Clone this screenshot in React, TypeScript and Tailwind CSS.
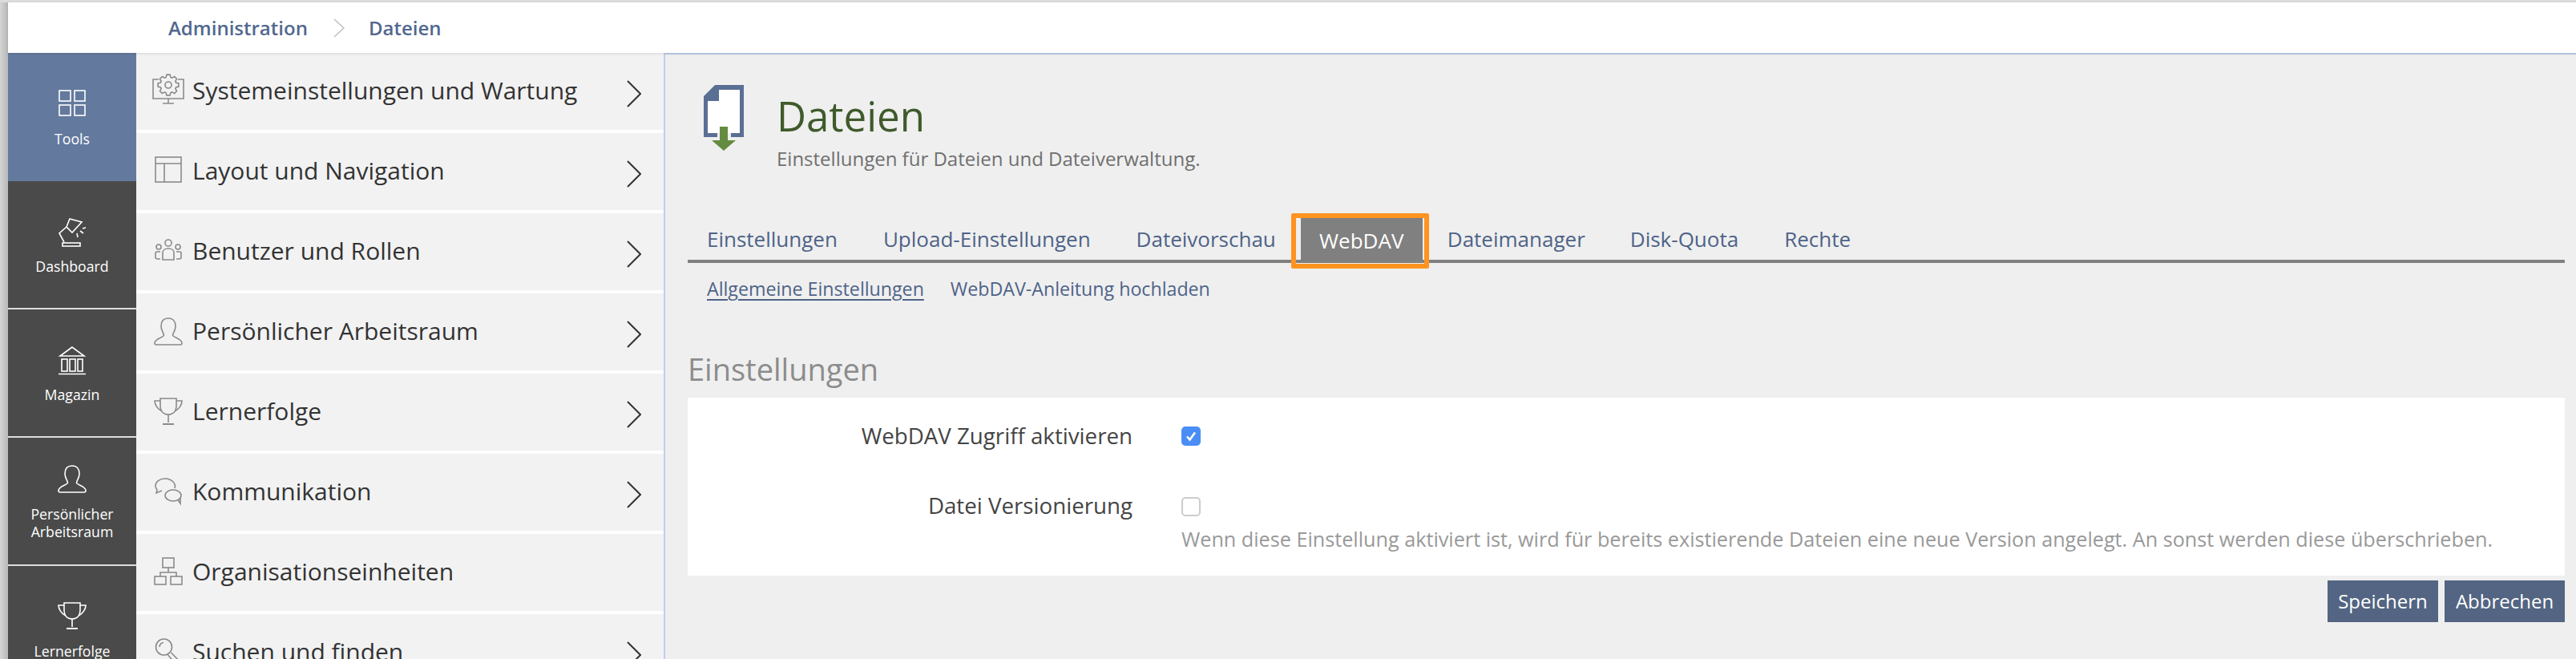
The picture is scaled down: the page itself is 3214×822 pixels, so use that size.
import React from "react";

const font = "font-['Open_Sans','Noto_Sans',sans-serif]";

function Svg({ color, sw = 1.6, children }: { color: string; sw?: number; children: React.ReactNode }) {
  return (
    <svg width={36} height={36} viewBox="0 0 36 36" fill="none" stroke={color} strokeWidth={sw} className="overflow-visible shrink-0">
      {children}
    </svg>
  );
}

function gearPath(cx: number, cy: number, outer: number, inner: number, teeth: number) {
  const pts: string[] = [];
  const step = (Math.PI * 2) / teeth;
  for (let i = 0; i < teeth; i++) {
    const a = i * step - Math.PI / 2;
    const list: [number, number][] = [
      [inner, a - step * 0.38],
      [outer, a - step * 0.2],
      [outer, a + step * 0.2],
      [inner, a + step * 0.38],
    ];
    for (const [r, t] of list) {
      pts.push(`${(cx + r * Math.cos(t)).toFixed(2)} ${(cy + r * Math.sin(t)).toFixed(2)}`);
    }
  }
  return `M${pts.join("L")}Z`;
}

const Grid = () => (
  <>
    <rect x="2" y="1" width="14" height="13" />
    <rect x="21" y="1" width="13" height="13" />
    <rect x="2" y="19" width="14" height="13" />
    <rect x="21" y="19" width="13" height="13" />
  </>
);
const Lamp = () => (
  <>
    <path d="M15 2L30 6L18 19L11 12Z" />
    <path d="M11 12L2 20L8 31" />
    <rect x="6" y="32" width="22" height="4" />
    <path d="M31 14L35 13M28 17L32 20M24 20L25 25" />
  </>
);
const Bank = () => (
  <>
    <path d="M18 2L3 13H33Z" />
    <rect x="5" y="17" width="7" height="15" />
    <rect x="15" y="17" width="7" height="15" />
    <rect x="25" y="17" width="6" height="15" />
    <path d="M1 35.5H35" />
  </>
);
const Person = () => (
  <path d="M18 1C12 1 9 5 9 11C9 16 12 19 12.5 22C12.5 25 1 26 1 32C1 33 2 34 3 34H33C34 34 35 33 35 32C35 26 23.5 25 23.5 22C24 19 27 16 27 11C27 5 24 1 18 1Z" />
);
const Trophy = () => (
  <>
    <path d="M8 1H28V10C28 17 24 21 18 21C12 21 8 17 8 10Z" />
    <path d="M8 4H1C1 8 4 14 10 17M28 4H35C35 8 32 14 26 17M18 21V31" />
    <path d="M11 33H25" strokeWidth={2} />
  </>
);
const SysGear = () => (
  <>
    <path d="M6 3H-1V27H37V3H30" />
    <path d="M18 27V33M11 33H25" />
    <circle cx="18" cy="10" r="4" />
    <path d={gearPath(18, 10, 13, 10, 8)} />
  </>
);
const LayoutIcon = () => (
  <>
    <rect x="2" y="0" width="32" height="31" />
    <path d="M2 8H34M13 8V31" />
  </>
);
const Users = () => (
  <>
    <circle cx="18" cy="7" r="4" />
    <path d="M11 28V19C11 16 14 14 18 14C22 14 25 16 25 19V28Z" />
    <circle cx="6" cy="12" r="3" />
    <circle cx="30" cy="12" r="3" />
    <path d="M8 18H4C2.5 18 2 19 2 20V25C2 26 3 27 5 27H8M28 18H32C33.5 18 34 19 34 20V25C34 26 33 27 31 27H28" />
  </>
);
const Chat = () => (
  <>
    <path d="M26 13C28 7 22 1 14 1C7 1 2 5 2 10C2 12 3 14 4 15L3 19L10 16" />
    <ellipse cx="24" cy="22" rx="10" ry="7" />
    <path d="M30 27.5L33 32V25" />
  </>
);
const Org = () => (
  <>
    <rect x="11" y="0" width="14" height="12" />
    <rect x="1" y="23" width="14" height="10" />
    <rect x="21" y="23" width="14" height="10" />
    <path d="M18 12V18M8 23V18H28V23" />
  </>
);
const Search = () => (
  <>
    <circle cx="12.5" cy="11" r="10" />
    <path d="M7 11C7 8 9 6 12 5.5" />
    <path d="M17 20.5L30 35L34 31L21.5 18" />
  </>
);
const Chevron = ({ w, h, color, sw }: { w: number; h: number; color: string; sw: number }) => (
  <svg width={w} height={h} viewBox={`0 0 ${w} ${h}`} fill="none" stroke={color} strokeWidth={sw} className="shrink-0">
    <path d={`M1 1L${w - 1} ${h / 2}L1 ${h - 1}`} />
  </svg>
);

function SideItem({ icon, label, active, h }: { icon: React.ReactNode; label: React.ReactNode; active?: boolean; h: string }) {
  return (
    <div className={`flex flex-col items-center justify-center shrink-0 pt-[4px] ${h} ${active ? "bg-[#64799e]" : "bg-[#4a4a4a]"}`}>
      <Svg color="#ffffff">{icon}</Svg>
      <div className="mt-[14px] text-center text-[17.7px] leading-[22px] text-white">{label}</div>
    </div>
  );
}

function MenuRow({ icon, label, arrow = true }: { icon: React.ReactNode; label: string; arrow?: boolean }) {
  return (
    <div className="flex items-center shrink-0 h-[96px] bg-[#f2f2f2] pl-[22px] pr-[28px]">
      <Svg color="#8a8a8a">{icon}</Svg>
      <span className="ml-[12px] mb-[2px] flex-1 text-[30px] leading-[38px] text-[#333333] whitespace-nowrap">{label}</span>
      {arrow && (
        <span className="mt-[6px]">
          <Chevron w={18} h={34} color="#333333" sw={2} />
        </span>
      )}
    </div>
  );
}

const tabClass = "text-[26px] leading-[34px] text-[#4e6388] whitespace-nowrap";

export default function App() {
  return (
    <div className={`${font} h-[822px] w-[3214px] overflow-hidden flex flex-col bg-[#efefef]`}>
      <div className="h-[3px] bg-[#dcdcdc] shrink-0" />
      <div className="flex flex-1 min-h-0">
        <div className="w-[10px] shrink-0 bg-gradient-to-r from-[#d4d4d4] to-[#b8b8b8]" />
        <div className="flex-1 min-w-0 flex flex-col">
          <header className="relative z-10 h-[63px] shrink-0 bg-white flex items-center pl-[200px] shadow-[0_1px_3px_rgba(0,0,0,0.12)]">
            <span className="text-[24px] font-semibold text-[#52688f]">Administration</span>
            <span className="ml-[32px] mr-[30px]">
              <Chevron w={14} h={24} color="#bdbdbd" sw={1.5} />
            </span>
            <span className="text-[24px] font-semibold text-[#52688f]">Dateien</span>
          </header>
          <div className="flex flex-1 min-h-0">
            <nav className="w-[160px] shrink-0 flex flex-col gap-[2px] bg-[#dddddd] overflow-hidden">
              <div className="flex flex-col shrink-0">
                <SideItem h="h-[160px]" active icon={<Grid />} label="Tools" />
                <SideItem h="h-[158px]" icon={<Lamp />} label="Dashboard" />
              </div>
              <SideItem h="h-[158px]" icon={<Bank />} label="Magazin" />
              <SideItem h="h-[158px]" icon={<Person />} label={<>Persönlicher<br />Arbeitsraum</>} />
              <SideItem h="h-[158px]" icon={<Trophy />} label="Lernerfolge" />
            </nav>
            <div className="w-[658px] shrink-0 flex flex-col gap-[4px] bg-white overflow-hidden">
              <MenuRow icon={<SysGear />} label="Systemeinstellungen und Wartung" />
              <MenuRow icon={<LayoutIcon />} label="Layout und Navigation" />
              <MenuRow icon={<Users />} label="Benutzer und Rollen" />
              <MenuRow icon={<Person />} label="Persönlicher Arbeitsraum" />
              <MenuRow icon={<Trophy />} label="Lernerfolge" />
              <MenuRow icon={<Chat />} label="Kommunikation" />
              <MenuRow icon={<Org />} label="Organisationseinheiten" arrow={false} />
              <MenuRow icon={<Search />} label="Suchen und finden" />
            </div>
            <main className="flex-1 min-w-0 border-l-[2px] border-t-[2px] border-[#bcd0e8] pl-[28px] pr-[14px] pt-[38px] flex flex-col">
              <div className="flex items-start h-[107px] shrink-0">
                <svg width="50" height="82" viewBox="0 0 50 82" className="ml-[20px] shrink-0">
                  <path d="M19 6H45V60H5V20H19Z" fill="#ffffff" />
                  <path d="M14 0H50V65H34V60H45V6H19V20H5V60H17V65H0V14Z" fill="#5a6f94" />
                  <path d="M20 52H30V69H40L25 82L10 69H20Z" fill="#648c40" />
                </svg>
                <div className="ml-[41px] pt-[8px]">
                  <h1 className="text-[51px] leading-[60px] font-normal text-[#3f5a2c]">Dateien</h1>
                  <p className="mt-[9px] text-[24px] leading-[30px] text-[#6f6f6f] whitespace-nowrap">Einstellungen für Dateien und Dateiverwaltung.</p>
                </div>
              </div>
              <div className="mt-[55px] h-[60px] shrink-0 flex items-end border-b-[4px] border-[#808080]">
                <div className="flex items-center h-[56px] pt-[4px] pl-[24px]">
                  <span className={tabClass}>Einstellungen</span>
                  <span className={`${tabClass} ml-[57px]`}>Upload-Einstellungen</span>
                  <span className={`${tabClass} ml-[57px]`}>Dateivorschau</span>
                </div>
                <div className="relative ml-[31px] h-[56px] w-[152px] -mb-[4px] bg-[#808080] flex items-center justify-center text-[26px] text-white">
                  WebDAV
                  <div className="absolute -left-[12px] -right-[8px] -top-[6px] -bottom-[7px] rounded-[2px] border-[6px] border-[#ff9320]" />
                </div>
                <div className="flex items-center h-[56px] pt-[4px] pl-[31px]">
                  <span className={tabClass}>Dateimanager</span>
                  <span className={`${tabClass} ml-[56px]`}>Disk-Quota</span>
                  <span className={`${tabClass} ml-[57px]`}>Rechte</span>
                </div>
              </div>
              <div className="mt-[17px] pl-[24px] flex text-[23.2px] leading-[30px] text-[#4e6388] whitespace-nowrap">
                <span className="underline underline-offset-4">Allgemeine Einstellungen</span>
                <span className="ml-[33px]">WebDAV-Anleitung hochladen</span>
              </div>
              <h2 className="mt-[61px] text-[38px] leading-[48px] font-normal text-[#8c8c8c]">Einstellungen</h2>
              <section className="mt-[12px] h-[222px] shrink-0 bg-white pt-[36px]">
                <div className="flex items-center h-[24px]">
                  <div className="w-[555px] text-right text-[27.7px] text-[#444444] whitespace-nowrap">WebDAV Zugriff aktivieren</div>
                  <div className="ml-[61px] w-[24px] h-[24px] rounded-[5px] bg-[#4a8ef5] flex items-center justify-center">
                    <svg width="16" height="16" viewBox="0 0 16 16" fill="none" stroke="#ffffff" strokeWidth="2.6">
                      <path d="M3 8.5L6.5 12.5L13 3.5" />
                    </svg>
                  </div>
                </div>
                <div className="flex items-center h-[24px] mt-[64px]">
                  <div className="w-[555px] -mt-[2px] text-right text-[27.7px] text-[#444444] whitespace-nowrap">Datei Versionierung</div>
                  <div className="ml-[61px] w-[24px] h-[24px] rounded-[5px] bg-white border-[2px] border-[#cccccc]" />
                </div>
                <p className="ml-[616px] mt-[13px] text-[25.2px] leading-[30px] text-[#999999] whitespace-nowrap">
                  Wenn diese Einstellung aktiviert ist, wird für bereits existierende Dateien eine neue Version angelegt. An sonst werden diese überschrieben.
                </p>
              </section>
              <div className="mt-[6px] flex justify-end gap-[8px]">
                <button className="w-[138px] h-[52px] bg-[#536582] text-white text-[24px]">Speichern</button>
                <button className="w-[150px] h-[52px] bg-[#536582] text-white text-[24px]">Abbrechen</button>
              </div>
            </main>
          </div>
        </div>
      </div>
    </div>
  );
}
